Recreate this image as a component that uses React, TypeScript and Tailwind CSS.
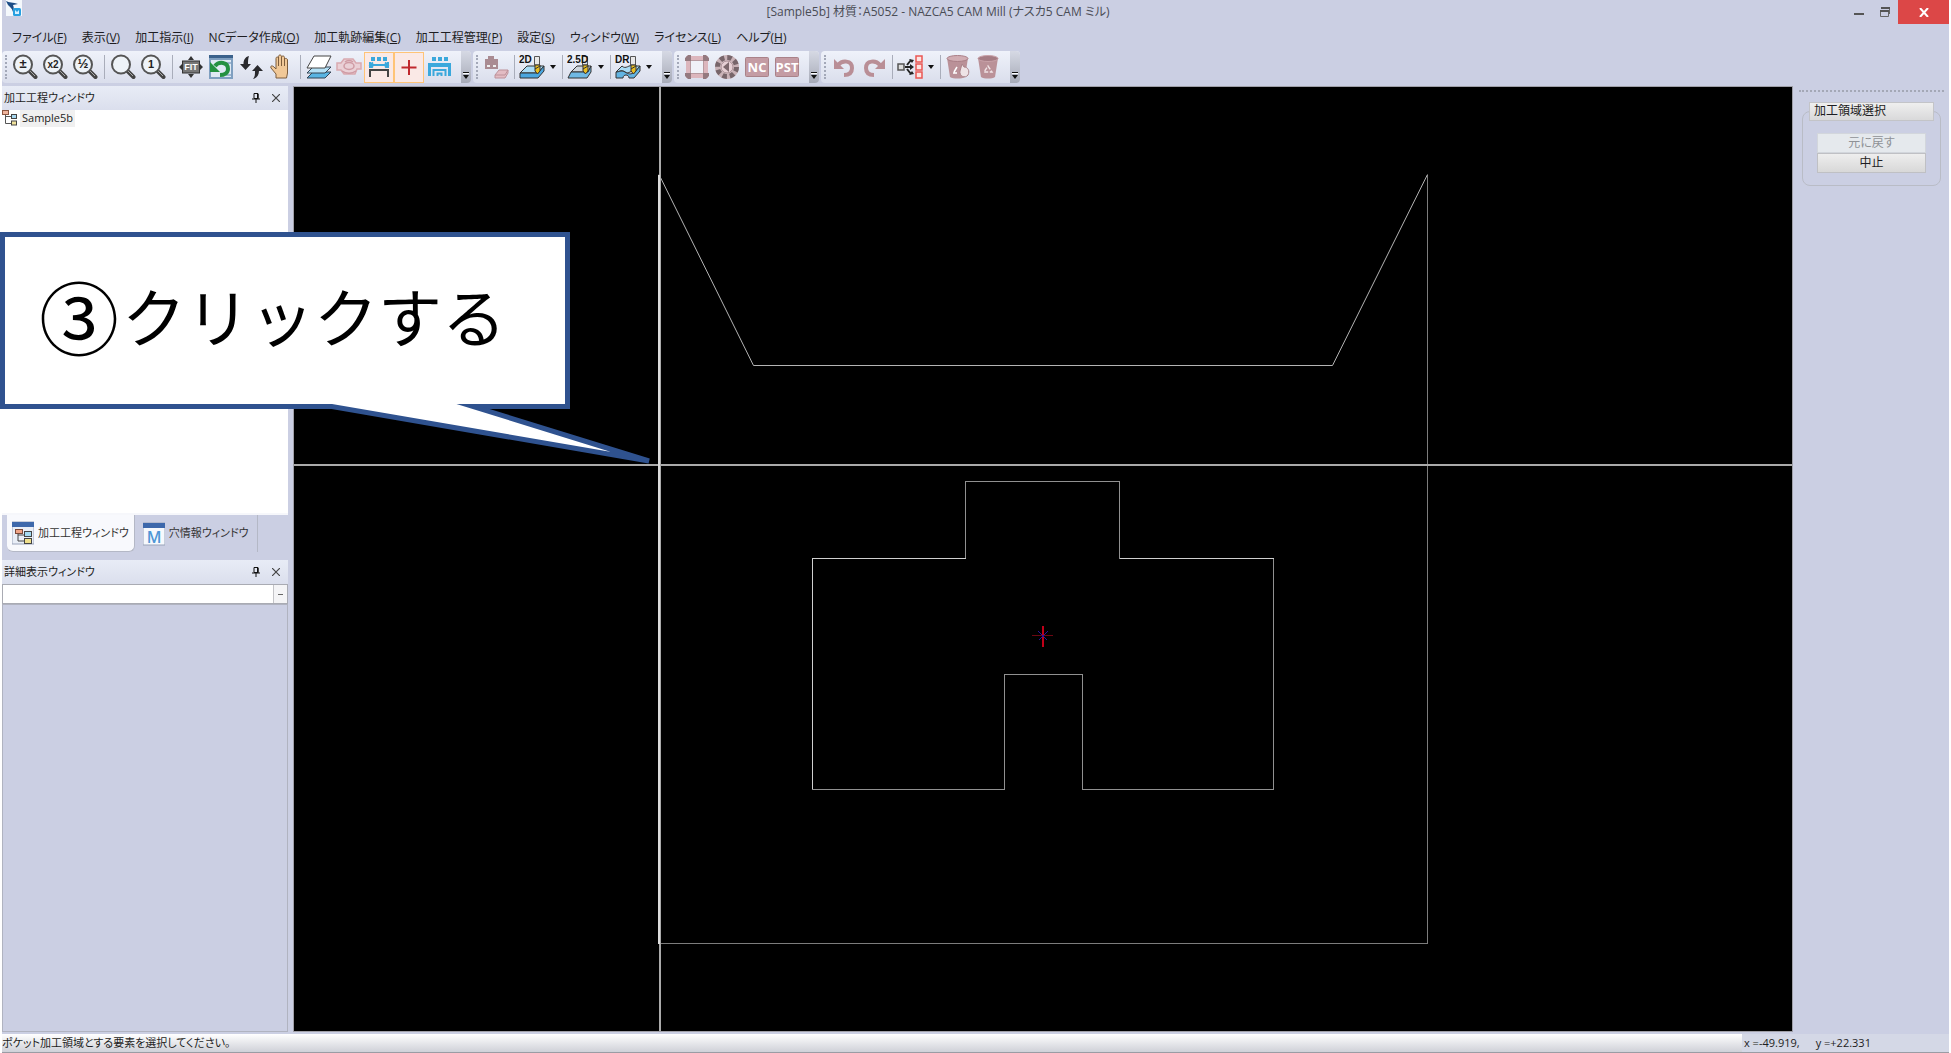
import React from 'react';
import clsx from 'clsx';

interface MenuEntry {
  label: string;
  hotkey: string;
}

const menuEntries: MenuEntry[] = [
  { label: 'ファイル', hotkey: 'F' },
  { label: '表示', hotkey: 'V' },
  { label: '加工指示', hotkey: 'I' },
  { label: 'NCデータ作成', hotkey: 'O' },
  { label: '加工軌跡編集', hotkey: 'C' },
  { label: '加工工程管理', hotkey: 'P' },
  { label: '設定', hotkey: 'S' },
  { label: 'ウィンドウ', hotkey: 'W' },
  { label: 'ライセンス', hotkey: 'L' },
  { label: 'ヘルプ', hotkey: 'H' },
];

const Icon: React.FC<{ children: React.ReactNode }> = ({ children }) => (
  <svg className="w-[26px] h-[26px] shrink-0" viewBox="0 0 26 26" fill="none" aria-hidden="true">
    {children}
  </svg>
);

const ToolButton: React.FC<{ label: string; active?: boolean; children: React.ReactNode }> = ({
  label,
  active,
  children,
}) => (
  <button
    type="button"
    aria-label={label}
    className={clsx(
      'flex h-[31px] w-[30px] shrink-0 items-center justify-center',
      active && 'border border-[#ffc477] bg-[#fae9e6]'
    )}
  >
    {children}
  </button>
);

const Separator: React.FC<{ wide?: boolean }> = ({ wide }) => (
  <div className={clsx('flex shrink-0 justify-center', wide ? 'w-2' : 'w-[6px]')}>
    <div className="h-6 w-px bg-[#a9adba]" />
  </div>
);

const DropArrow: React.FC<{ label: string }> = ({ label }) => (
  <button type="button" aria-label={label} className="flex h-[31px] w-3 shrink-0 items-center justify-center">
    <svg className="h-1 w-[6px]" viewBox="0 0 6 4">
      <path d="M0 0h6L3 4z" fill="#111" />
    </svg>
  </button>
);

const ToolGroup: React.FC<{ name: string; children: React.ReactNode }> = ({ name, children }) => (
  <div
    role="toolbar"
    aria-label={name}
    className="flex h-8 items-center rounded-sm bg-linear-to-b from-[#eff2fa] to-[#dadeec]"
  >
    <div className="flex w-2 shrink-0 justify-center">
      <div className="h-6 border-l-2 border-dotted border-[#a3a8b8]" />
    </div>
    {children}
    <button
      type="button"
      aria-label={`${name} オプション`}
      className="ml-[7px] flex h-8 w-[10px] items-end justify-center rounded-r-sm bg-linear-to-b from-[#d6d9e4] to-[#a7abb8] pb-1"
    >
      <svg className="h-[7px] w-[6px]" viewBox="0 0 6 7">
        <path d="M0 0h6v1H0zM0 3h6L3 7z" fill="#111" />
        <path d="M0 1h6v1H0z" fill="#fff" />
      </svg>
    </button>
  </div>
);

const Lens: React.FC<{ text?: string; size?: number }> = ({ text, size = 8 }) => (
  <Icon>
    <path d="M17.500 17l6 6" stroke="#444" strokeWidth="4" strokeLinecap="round" />
    <path d="M18 17l5 5" stroke="#aaa" strokeWidth="1" />
    <circle cx="11" cy="10.500" r="9" fill="#eef3f8" stroke="#555" strokeWidth="2" />
    <text x="11" y="14" textAnchor="middle" fontSize={size} fontWeight="700" fill="#222" fontFamily="Liberation Sans, sans-serif">
      {text}
    </text>
  </Icon>
);

const MachineIcon: React.FC<{ text: string; variant: 'flat' | 'step' | 'wave' }> = ({ text, variant }) => (
  <Icon>
    {variant === 'flat' && (
      <>
        <path d="M1 19L8 12h17l-6 7z" fill="#a9dcf7" stroke="#333" />
        <path d="M1 19h18l6-7v5l-6 7H1z" fill="#4aa6df" stroke="#333" />
      </>
    )}
    {variant === 'step' && (
      <>
        <path d="M4 18l6-6h14l-3 6z" fill="#cfd6dd" stroke="#333" />
        <path d="M4 18h17l3-6v6l-4 6H1z" fill="#6fb9e4" stroke="#333" />
      </>
    )}
    {variant === 'wave' && (
      <>
        <path d="M1 18l6-6c4 4 7-2 11 0h7l-5 6c-4-3-6 3-10 0s-6 0-9 0z" fill="#a9dcf7" stroke="#333" />
        <path d="M1 18c3 0 6-2 9 0s6 3 10 0l5-6v5l-6 7h-5c0-4-6-4-6 0H1z" fill="#62b4e2" stroke="#333" />
      </>
    )}
    <path d="M15.500 2.500h5V11h-5z" fill="#e8e8e8" stroke="#555" />
    <path d="M16 11h5v6l-2.500 3L16 17z" fill="#e7bd21" stroke="#333" />
    <path d="M16 15l5-3" stroke="#333" />
    <text x="0" y="9" fontSize="10" fontWeight="700" fill="#111" fontFamily="Liberation Sans, sans-serif">
      {text}
    </text>
  </Icon>
);

const BadgeIcon: React.FC<{ text: string }> = ({ text }) => (
  <Icon>
    <rect x="1.500" y="3.500" width="23" height="19" rx="1" fill="#c49ca4" stroke="#a98289" />
    <text x="13" y="18" textAnchor="middle" fontSize="13" fontWeight="700" fill="#fff" fontFamily="Open Sans, sans-serif">
      {text}
    </text>
  </Icon>
);

const TreeGlyph: React.FC = () => (
  <svg className="h-4 w-4 shrink-0" viewBox="0 0 16 16" fill="none">
    <path d="M3.500 3v10.500H9M3.500 6.500H9" stroke="#555" />
    <rect x=".5" y=".5" width="6" height="4" fill="#f0b49c" stroke="#8a5540" />
    <rect x="9.500" y="4.500" width="5" height="4" fill="#a8d8f0" stroke="#444" />
    <rect x="9.500" y="11" width="5" height="4" fill="#f0e29c" stroke="#444" />
  </svg>
);

const PaneHeader: React.FC<{ title: string }> = ({ title }) => (
  <div className="flex h-6 shrink-0 items-center bg-linear-to-b from-[#e8ecf6] to-[#dbdfed] pl-[2px] pr-[6px]">
    <h2 className="flex-1 text-[11px]">{title}</h2>
    <button type="button" aria-label="ピン" className="mr-[10px] flex h-4 w-2 items-center">
      <svg className="h-[10px] w-2" viewBox="0 0 8 10" fill="none">
        <path d="M2 .5h4v5H2zM0 6h8M4 6v4" stroke="#111" />
        <path d="M5 1h1.500v5H5z" fill="#111" />
      </svg>
    </button>
    <button type="button" aria-label="閉じる" className="flex h-3 w-3 items-center justify-center">
      <svg className="h-2 w-2" viewBox="0 0 8 8">
        <path d="M0 0l8 8M8 0L0 8" stroke="#444" strokeWidth="1.200" />
      </svg>
    </button>
  </div>
);

const TitleBar: React.FC = () => (
  <header className="flex h-6 shrink-0 items-center">
    <svg className="ml-1 mr-2 h-4 w-4 self-start" viewBox="0 0 16 16">
      <path d="M0 0h16v16H0z" fill="#f4f8fc" />
      <path d="M0 1c3 2 7 1 12 3l-5 1c1 2 1 5 0 7C6 8 3 6 2 5z" fill="#1c4c86" />
      <rect x="7" y="8" width="8" height="8" rx="1.500" fill="#28a0e0" />
      <path d="M9 10v4h4v-4l-2 2z" fill="#d8f0ff" />
    </svg>
    <h1 className="flex-1 text-center text-xs text-[#4a4c55]">
      [Sample5b] 材質：A5052 - NAZCA5 CAM Mill (ナスカ5 CAM ミル)
    </h1>
    <button type="button" aria-label="最小化" className="flex h-6 w-[26px] items-center justify-center">
      <svg className="h-3 w-[10px]" viewBox="0 0 10 12">
        <path d="M0 7h10v2H0z" fill="#555" />
      </svg>
    </button>
    <button type="button" aria-label="元に戻す(縮小)" className="flex h-6 w-[26px] items-center justify-center">
      <svg className="h-[10px] w-[10px]" viewBox="0 0 10 10" fill="none">
        <path d="M.5 5v4.500h8V4" stroke="#666" />
        <path d="M1 0h9v2H1zM0 3h9v2H0z" fill="#555" />
        <path d="M9.500 2v5" stroke="#666" />
      </svg>
    </button>
    <button type="button" aria-label="終了" className="flex h-6 w-[51px] items-center justify-center bg-[#dc4747]">
      <svg className="h-[9px] w-[10px]" viewBox="0 0 10 9">
        <path d="M1 0l8 9M9 0L1 9" stroke="#fff" strokeWidth="2" />
      </svg>
    </button>
  </header>
);

const Toolbars: React.FC = () => (
  <div className="flex h-[35px] shrink-0 gap-[2px]">
    <ToolGroup name="表示">
      <ToolButton label="拡大縮小"><Lens text="±" size={13} /></ToolButton>
      <ToolButton label="2倍"><Lens text="x2" size={10} /></ToolButton>
      <ToolButton label="1/2倍"><Lens text="½" size={13} /></ToolButton>
      <Separator wide />
      <ToolButton label="窓拡大"><Lens /></ToolButton>
      <ToolButton label="等倍"><Lens text="1" size={11} /></ToolButton>
      <Separator wide />
      <ToolButton label="全体表示">
        <Icon>
          <rect x="4.500" y="7" width="17" height="12" fill="#777" stroke="#333" />
          <text x="13" y="16" textAnchor="middle" fontSize="9" fontWeight="700" fill="#fff" fontFamily="Liberation Sans, sans-serif">FIT</text>
          <path d="M13 2l3 4h-6zM13 24l3-4h-6zM1 13l3-3v6zM25 13l-3-3v6z" fill="#333" />
        </Icon>
      </ToolButton>
      <ToolButton label="再描画">
        <Icon>
          <path d="M1 1h24v24H1z" fill="#7f9fc0" />
          <path d="M3 6h20v17H3z" fill="#dfe9f4" />
          <path d="M1 1h24v3H1z" fill="#3b628c" />
          <path d="M15 9h8M18 21h5" stroke="#9db5d0" strokeWidth="2" />
          <path d="M7 12c4-5 13-4 13 3 0 4-4 6-8 6" stroke="#249141" strokeWidth="4" />
          <path d="M2 8v10h10z" fill="#249141" />
        </Icon>
      </ToolButton>
      <ToolButton label="回転">
        <Icon>
          <path d="M11 2C7 3 5.500 6 5.500 10H2l5.500 6L13 10h-3c0-3 0-5 1-8z" fill="#2a2a2e" />
          <path d="M15 25c4-1 6-4 6-8h4l-5.500-6L14 17h3c0 3 0 6-2 8z" fill="#2a2a2e" />
        </Icon>
      </ToolButton>
      <ToolButton label="移動">
        <Icon>
          <path d="M8 24v-4L3 14c-1-2 1-3 3-1l2 2V4.500c0-2 2.500-2 2.500 0V2.500c0-2 3-2 3 0v1c0-2 3-2 3 0v2c0-1.500 3-1.500 3 .5V19l-1 5z" fill="#f1c897" stroke="#7d5d3c" />
          <path d="M10.500 4v8M13.500 3v9M16.500 5v7" stroke="#7d5d3c" />
        </Icon>
      </ToolButton>
      <Separator wide />
      <ToolButton label="レイヤ">
        <Icon>
          <path d="M1 24l6-6h18l-6 6z" fill="#58b4e3" stroke="#345" />
          <path d="M1 19l6-6h18l-6 6z" fill="#b3e0f6" stroke="#345" />
          <path d="M1 14L8 2h17l-6 12z" fill="#fff" stroke="#444" />
        </Icon>
      </ToolButton>
      <ToolButton label="シミュレーション">
        <Icon>
          <path d="M1 9h4l3-4h9l3 4h5v6h-4l-2 5H8l-3-4H1z" fill="#ead0d6" stroke="#d9a9b0" strokeWidth="1.500" />
          <ellipse cx="13" cy="12" rx="5" ry="3.500" stroke="#cf9ba4" strokeWidth="1.500" />
          <path d="M6 17c4 3 10 3 14 0M9 8c2-2 6-2 8 0" stroke="#cf9ba4" strokeWidth="1.500" />
        </Icon>
      </ToolButton>
      <ToolButton label="寸法" active>
        <Icon>
          <path d="M5 3h4v4H5zM11 3h4v4h-4zM17 3h4v4h-4z" fill="#3aa8dc" />
          <path d="M4 11h18M4 8v6M22 8v6M7 8.500L4 11l3 2.500M19 8.500l3 2.500-3 2.500" stroke="#3aa8dc" strokeWidth="2" />
          <path d="M4 23v-7h18v7" stroke="#444" strokeWidth="2" />
        </Icon>
      </ToolButton>
      <ToolButton label="原点" active>
        <Icon>
          <path d="M13 6v15M5.500 13.500h15" stroke="#c0282d" strokeWidth="2" />
        </Icon>
      </ToolButton>
      <ToolButton label="形状">
        <Icon>
          <path d="M6 3h4v4H6zM12 3h4v4h-4zM18 3h4v4h-4z" fill="#3aa8dc" />
          <path d="M2 9h23v13h-3v-9H5v9H2z" fill="#3aa8dc" />
          <path d="M7.500 22v-6h12v6M11.500 22v-2.500h4V22" stroke="#3aa8dc" strokeWidth="2" />
        </Icon>
      </ToolButton>
    </ToolGroup>

    <ToolGroup name="加工">
      <ToolButton label="工具">
        <Icon>
          <path d="M5 2h6v3H5zM2 5h13v10H2z" fill="#a98b92" />
          <path d="M4 11h3v2H4zM10 11h3v2h-3z" fill="#eee" />
          <path d="M12 21l4-5h9v3l-3 5H12z" fill="#e3bcc3" stroke="#bd929a" />
          <path d="M12 21h10l3-5" stroke="#bd929a" />
        </Icon>
      </ToolButton>
      <Separator />
      <ToolButton label="2D加工"><MachineIcon text="2D" variant="flat" /></ToolButton>
      <DropArrow label="2D加工メニュー" />
      <Separator />
      <ToolButton label="2.5D加工"><MachineIcon text="2.5D" variant="step" /></ToolButton>
      <DropArrow label="2.5D加工メニュー" />
      <Separator />
      <ToolButton label="DR加工"><MachineIcon text="DR" variant="wave" /></ToolButton>
      <DropArrow label="DR加工メニュー" />
    </ToolGroup>

    <ToolGroup name="出力">
      <ToolButton label="素材">
        <Icon>
          <rect x="4" y="4" width="18" height="18" fill="#f0f1f8" stroke="#dcb6bd" strokeWidth="4" />
          <rect x="6.500" y="6.500" width="13" height="13" stroke="#b79aa0" />
          <path d="M1 4l3-3h3v6H1zM25 4l-3-3h-3v6h6zM1 22l3 3h3v-6H1zM25 22l-3 3h-3v-6h6z" fill="#94797f" />
        </Icon>
      </ToolButton>
      <ToolButton label="工具マガジン">
        <Icon>
          <circle cx="13" cy="13" r="9.500" fill="#d9c3c8" stroke="#c9b2b7" strokeWidth="5" />
          <circle cx="13" cy="13" r="9.500" stroke="#77656a" strokeWidth="5" strokeDasharray="4.500 2.960" />
          <circle cx="13" cy="13" r="6" fill="#e6cfd4" stroke="#a98f95" />
          <path d="M15 8v10l-6-5z" fill="#7d686d" />
        </Icon>
      </ToolButton>
      <ToolButton label="NC"><BadgeIcon text="NC" /></ToolButton>
      <ToolButton label="PST"><BadgeIcon text="PST" /></ToolButton>
    </ToolGroup>

    <ToolGroup name="編集">
      <ToolButton label="元に戻す">
        <Icon>
          <path d="M7 11c4-5 14-5 14 3 0 5-3 7-8 7" stroke="#b98e96" strokeWidth="4" />
          <path d="M3 5v10h10z" fill="#b98e96" />
        </Icon>
      </ToolButton>
      <ToolButton label="やり直し">
        <Icon>
          <path d="M19 11C15 6 5 6 5 14c0 5 3 7 8 7" stroke="#b98e96" strokeWidth="4" />
          <path d="M24 5v10H14z" fill="#b98e96" />
        </Icon>
      </ToolButton>
      <Separator />
      <ToolButton label="工程分割">
        <Icon>
          <rect x="1" y="10" width="6" height="6" fill="#ddd" stroke="#555" strokeWidth="1.500" />
          <path d="M8 13h6M10 11l4-5M10 15l4 5" stroke="#222" strokeWidth="2" />
          <path d="M17 13l-4-3v6zM17 6l-5-1 3 4zM17 20l-5 1 3-4z" fill="#222" />
          <path d="M19 2h6v6h-6zM19 10h6v6h-6zM19 18h6v6h-6z" fill="#fde4e2" stroke="#ea5753" strokeWidth="1.500" />
        </Icon>
      </ToolButton>
      <DropArrow label="工程分割メニュー" />
      <Separator />
      <ToolButton label="要素削除">
        <Icon>
          <path d="M2 4h21l-3 19c-3 2-12 2-15 0z" fill="#ba9198" />
          <ellipse cx="12.500" cy="4.500" rx="10.500" ry="3" fill="#d1adb3" stroke="#aa7f87" />
          <path d="M9 18l3-5M8 19h4" stroke="#fff" strokeWidth="1.500" />
          <path d="M17 10l2 3c4 0 6 4 4 8-3 4-9 1-8-4z" fill="#eee3e6" stroke="#a98289" />
        </Icon>
      </ToolButton>
      <ToolButton label="全削除">
        <Icon>
          <path d="M3 4h20l-3 19c-3 2-11 2-14 0z" fill="#ba9198" />
          <ellipse cx="13" cy="4.500" rx="10" ry="3" fill="#a57c84" stroke="#c9a2a9" />
          <path d="M13 12l4 6H9z" stroke="#f0e2e5" strokeWidth="1.500" strokeDasharray="4 1.500" />
        </Icon>
      </ToolButton>
    </ToolGroup>
  </div>
);

const LeftDock: React.FC = () => (
  <aside className="flex w-[286px] shrink-0 flex-col">
    <PaneHeader title="加工工程ウィンドウ" />
    <ul className="h-[403px] shrink-0 bg-white" role="tree">
      <li className="flex items-center gap-[2px] text-[11px]" role="treeitem">
        <TreeGlyph />
        <span className="bg-[#f0f0f0] px-[2px]">Sample5b</span>
      </li>
    </ul>
    <div className="flex h-[47px] shrink-0 items-start border-t-2 border-[#f6f7fb] pl-[5px] text-[11px] text-[#333]" role="tablist">
      <button type="button" role="tab" aria-selected="true" className="flex h-[37px] shrink-0 items-center gap-1 rounded-b-md border-b border-r border-[#b4b8c6] bg-[#f8f9fd] px-[5px] whitespace-nowrap">
        <svg className="h-6 w-[22px] shrink-0" viewBox="0 0 22 24" fill="none">
          <path d="M0 1h22v22H0z" fill="#e9eef7" stroke="#9aa4ba" />
          <path d="M0 1h22v5H0z" fill="#3d68ab" />
          <path d="M6 11v9h7M6 14h7" stroke="#444" />
          <rect x="3.500" y="8.500" width="7" height="4" fill="#f0a487" stroke="#7a4a3a" />
          <rect x="12.500" y="10.500" width="7" height="5" fill="#a5daf2" stroke="#444" />
          <rect x="12.500" y="17.500" width="7" height="5" fill="#f0e08c" stroke="#444" />
        </svg>
        加工工程ウィンドウ
      </button>
      <button type="button" role="tab" aria-selected="false" className="flex h-[37px] shrink-0 items-center gap-1 border-r border-[#b4b8c6] px-2 whitespace-nowrap">
        <svg className="h-6 w-[22px] shrink-0" viewBox="0 0 22 24" fill="none">
          <path d="M0 1h22v22H0z" fill="#f6f9fd" stroke="#9aa4ba" />
          <path d="M0 1h22v5H0z" fill="#3d68ab" />
          <text x="11" y="21" textAnchor="middle" fontSize="16" fontWeight="600" fill="#4e97d6" fontFamily="Open Sans, sans-serif">M</text>
        </svg>
        穴情報ウィンドウ
      </button>
    </div>
    <PaneHeader title="詳細表示ウィンドウ" />
    <div className="flex h-5 shrink-0 border border-[#a9abb3] bg-white">
      <input type="text" aria-label="詳細項目" className="min-w-0 flex-1 px-1 text-xs outline-none" />
      <button type="button" aria-label="項目を開く" className="flex w-[14px] items-center justify-center border-l border-[#c4c4c8] bg-[#f4f4f6]">
        <span className="h-px w-[5px] bg-[#666]" />
      </button>
    </div>
    <div className="flex-1 border border-[#b0b3c0]" />
  </aside>
);

// Part outlines in viewport pixels, crosshair drawn on top.
const Viewport: React.FC = () => (
  <div className="ml-[5px] min-w-0 flex-1 overflow-hidden border border-[#a0a0a8] bg-black">
    <svg className="block h-full w-full" fill="none" shapeRendering="crispEdges">
      <g transform="translate(-294 -88)">
        <path d="M659 175.500V944.500H1427.500V175.500" stroke="#7c7c7c" />
        <path d="M659 175.500L753.500 366.500H1332.500L1427.500 175.500" stroke="#b4b4b4" shapeRendering="auto" />
        <path
          d="M812.500 559.500H965.500V482.500H1119.500V559.500H1273.500V790.500H1082.500V675.500H1004.500V790.500H812.500Z"
          stroke="#909090"
        />
        <path d="M812.500 790V559.500H965.500M1119.500 559.500H1273.500" stroke="#d0d0d0" />
        <path d="M1032 636.500h21" stroke="#6c0612" />
        <path d="M1043 627v21" stroke="#c00018" strokeWidth="2" />
        <path d="M1038.500 632.500l9 9M1047.500 632.500l-9 9" stroke="#2a12a0" />
        <path d="M660 86V1036M290 466H1800" stroke="#aaaaaa" strokeWidth="2" />
        <path d="M659 176V945" stroke="#dcdcdc" strokeWidth="2" />
      </g>
    </svg>
  </div>
);

const SelectionPanel: React.FC = () => (
  <aside className="w-[156px] shrink-0 pl-[6px] pr-[5px] pt-1">
    <div className="border-t-2 border-dotted border-[#a4a8b6]" />
    <fieldset className="mx-[3px] mt-[10px] rounded-lg border border-[#b9bcc6] px-[6px] pb-3">
      <legend className="h-[19px] w-full border border-[#c3c4c8] bg-linear-to-b from-[#efefef] to-[#d9d9da] px-1 text-xs leading-4">
        加工領域選択
      </legend>
      <div className="flex flex-col px-2 pt-3 text-xs">
        <button type="button" disabled className="h-5 border border-[#d2d6dc] bg-[#e5e9ed] leading-4 text-[#8f9296]">
          元に戻す
        </button>
        <button type="button" className="h-5 border border-[#bfc0c4] bg-linear-to-b from-[#eeeeee] to-[#d8d8d8] leading-4">
          中止
        </button>
      </div>
    </fieldset>
  </aside>
);

const Callout: React.FC = () => (
  <div className="absolute left-0 top-[232px] w-[570px] [font-feature-settings:normal]">
    <div className="flex h-[177px] items-center border-5 border-[#2f528f] bg-white pl-[34px] text-black">
      <p className="flex items-center gap-[3px] pb-[6px] leading-none whitespace-nowrap">
        <span className="text-[80px] leading-none">③</span>
        <span className="text-[64px] leading-none">クリックする</span>
      </p>
    </div>
    <svg className="absolute left-0 top-[172px] h-[62px] w-[660px]" viewBox="0 404 660 62">
      <path d="M294 400L649 461L452 400" fill="#fff" stroke="#2f528f" strokeWidth="5" strokeLinejoin="bevel" />
    </svg>
  </div>
);

const App: React.FC = () => {
  return (
    <div className="relative h-screen overflow-hidden font-[Open_Sans,Noto_Sans_CJK_JP,sans-serif] text-[#1d1d22] [font-feature-settings:'palt']">
      <div className="flex h-full flex-col border-x-2 border-white bg-[#cbcfe3]">
        <TitleBar />
        <nav className="flex h-[27px] shrink-0 items-center gap-[15px] pl-[10px] text-xs">
          {menuEntries.map((entry) => (
            <button key={entry.hotkey} type="button" className="whitespace-nowrap">
              {entry.label}(<u>{entry.hotkey}</u>)
            </button>
          ))}
        </nav>
        <Toolbars />
        <main className="flex min-h-0 flex-1">
          <LeftDock />
          <Viewport />
          <SelectionPanel />
        </main>
        <footer className="mt-[2px] flex h-[19px] shrink-0 items-center border-b border-[#9a9ca4] bg-linear-to-b from-white to-[#cfd1d8] text-[11px]">
          <span className="flex-1">ポケット加工領域とする要素を選択してください。</span>
          <span className="flex h-full w-[207px] items-center gap-4 bg-[#d4d8e6] pl-[2px]">
            <span>x =-49.919,</span>
            <span>y =+22.331</span>
          </span>
        </footer>
      </div>
      <Callout />
    </div>
  );
};

export default App;
